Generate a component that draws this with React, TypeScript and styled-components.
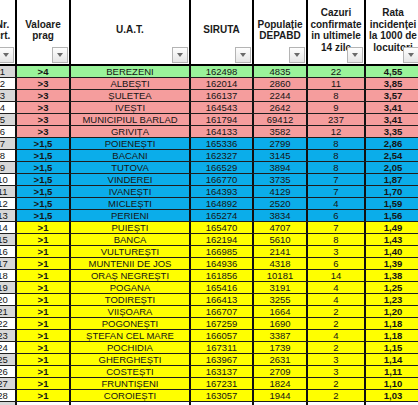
import styled, { createGlobalStyle } from 'styled-components';

const GlobalStyle = createGlobalStyle`
  html, body {
    margin: 0;
    padding: 0;
    overflow: hidden;
    background: #ffffff;
    font-family: 'Liberation Sans', Arial, sans-serif;
  }
`;

const COLUMNS = '27px 54px 120px 63px 54px 58px 56px';

type Tone = 'green' | 'red' | 'blue' | 'yellow' | 'none';

const toneColors: Record<Tone, string> = {
  green: '#9af39a',
  red: '#f59d9d',
  blue: '#0badea',
  yellow: '#ffff00',
  none: '#ffffff',
};

const Sheet = styled.div`
  display: flex;
  flex-direction: column;
  width: max-content;
  margin-left: -10px;
  color: #151515;
`;

const HeaderRow = styled.div`
  display: grid;
  grid-template-columns: ${COLUMNS};
  height: 66px;
  box-sizing: border-box;
  border-bottom: 2px solid #000;
  background: #ffffff;
`;

const HeaderCell = styled.div`
  position: relative;
  display: flex;
  align-items: center;
  justify-content: center;
  padding-bottom: 4px;
  box-sizing: border-box;
  border-right: 2px solid #000;
  font-size: 10px;
  font-weight: 700;
  line-height: 11.5px;
  text-align: center;
  white-space: pre-line;
  overflow: hidden;
  color: #1a1a1a;
`;

const FilterButton = styled.span`
  position: absolute;
  right: 1px;
  bottom: 1px;
  width: 16px;
  height: 16px;
  box-sizing: border-box;
  border: 1px solid #b4b4b4;
  background: linear-gradient(#fefefe, #e6e6e6);
  display: flex;
  align-items: center;
  justify-content: center;

  &::after {
    content: '';
    width: 0;
    height: 0;
    border-left: 3.5px solid transparent;
    border-right: 3.5px solid transparent;
    border-top: 4px solid #6a6a6a;
  }
`;

const DataRow = styled.div<{ $tone: Tone }>`
  display: grid;
  grid-template-columns: ${COLUMNS};
  height: 12px;
  box-sizing: border-box;
  border-bottom: 1px solid #1e1e1e;
  background: ${(p) => toneColors[p.$tone]};
`;

const Cell = styled.div<{ $bold?: boolean }>`
  box-sizing: border-box;
  border-right: 2px solid #111;
  font-size: 9.5px;
  font-weight: ${(p) => (p.$bold ? 700 : 400)};
  line-height: 11px;
  text-align: center;
  white-space: nowrap;
  overflow: hidden;
`;

const IndexCell = styled(Cell)<{ $odd: boolean }>`
  background: ${(p) => (p.$odd ? '#d8d8d8' : '#ffffff')};
`;

const headers = [
  'Nr.\ncrt.',
  'Valoare\nprag',
  'U.A.T.',
  'SIRUTA',
  'Populație\nDEPABD',
  'Cazuri\nconfirmate\nin ultimele\n14 zile',
  'Rata\nincidenței\nla 1000 de\nlocuitori',
];

type Row = [string, string, string, string, string, string, Tone];

const rows: Row[] = [
  ['>4', 'BEREZENI', '162498', '4835', '22', '4,55', 'green'],
  ['>3', 'ALBEȘTI', '162014', '2860', '11', '3,85', 'red'],
  ['>3', 'ȘULETEA', '166137', '2244', '8', '3,57', 'red'],
  ['>3', 'IVEȘTI', '164543', '2642', '9', '3,41', 'red'],
  ['>3', 'MUNICIPIUL BARLAD', '161794', '69412', '237', '3,41', 'red'],
  ['>3', 'GRIVIȚA', '164133', '3582', '12', '3,35', 'red'],
  ['>1,5', 'POIENEȘTI', '165336', '2799', '8', '2,86', 'blue'],
  ['>1,5', 'BACANI', '162327', '3145', '8', '2,54', 'blue'],
  ['>1,5', 'TUTOVA', '166529', '3894', '8', '2,05', 'blue'],
  ['>1,5', 'VINDEREI', '166770', '3735', '7', '1,87', 'blue'],
  ['>1,5', 'IVANEȘTI', '164393', '4129', '7', '1,70', 'blue'],
  ['>1,5', 'MICLEȘTI', '164892', '2520', '4', '1,59', 'blue'],
  ['>1,5', 'PERIENI', '165274', '3834', '6', '1,56', 'blue'],
  ['>1', 'PUIEȘTI', '165470', '4707', '7', '1,49', 'yellow'],
  ['>1', 'BANCA', '162194', '5610', '8', '1,43', 'yellow'],
  ['>1', 'VULTUREȘTI', '166985', '2141', '3', '1,40', 'yellow'],
  ['>1', 'MUNTENII DE JOS', '164936', '4318', '6', '1,39', 'yellow'],
  ['>1', 'ORAȘ NEGREȘTI', '161856', '10181', '14', '1,38', 'yellow'],
  ['>1', 'POGANA', '165416', '3191', '4', '1,25', 'yellow'],
  ['>1', 'TODIREȘTI', '166413', '3255', '4', '1,23', 'yellow'],
  ['>1', 'VIIȘOARA', '166707', '1664', '2', '1,20', 'yellow'],
  ['>1', 'POGONEȘTI', '167259', '1690', '2', '1,18', 'yellow'],
  ['>1', 'ȘTEFAN CEL MARE', '166057', '3387', '4', '1,18', 'yellow'],
  ['>1', 'POCHIDIA', '167311', '1739', '2', '1,15', 'yellow'],
  ['>1', 'GHERGHEȘTI', '163967', '2631', '3', '1,14', 'yellow'],
  ['>1', 'COSTEȘTI', '163137', '2709', '3', '1,11', 'yellow'],
  ['>1', 'FRUNTIȘENI', '167231', '1824', '2', '1,10', 'yellow'],
  ['>1', 'COROIEȘTI', '163057', '1944', '2', '1,03', 'yellow'],
  ['', 'SOLEȘTI', '166066', '1066', '1', '0,94', 'none'],
];

export default function App() {
  return (
    <>
      <GlobalStyle />
      <Sheet>
        <HeaderRow>
          {headers.map((h) => (
            <HeaderCell key={h}>
              {h}
              <FilterButton />
            </HeaderCell>
          ))}
        </HeaderRow>
        {rows.map(([prag, uat, siruta, pop, cases, rate, tone], i) => (
          <DataRow key={uat} $tone={tone}>
            <IndexCell $odd={i % 2 === 0}>{i + 1}</IndexCell>
            <Cell $bold>{prag}</Cell>
            <Cell>{uat}</Cell>
            <Cell>{siruta}</Cell>
            <Cell>{pop}</Cell>
            <Cell>{cases}</Cell>
            <Cell $bold>{rate}</Cell>
          </DataRow>
        ))}
      </Sheet>
    </>
  );
}
